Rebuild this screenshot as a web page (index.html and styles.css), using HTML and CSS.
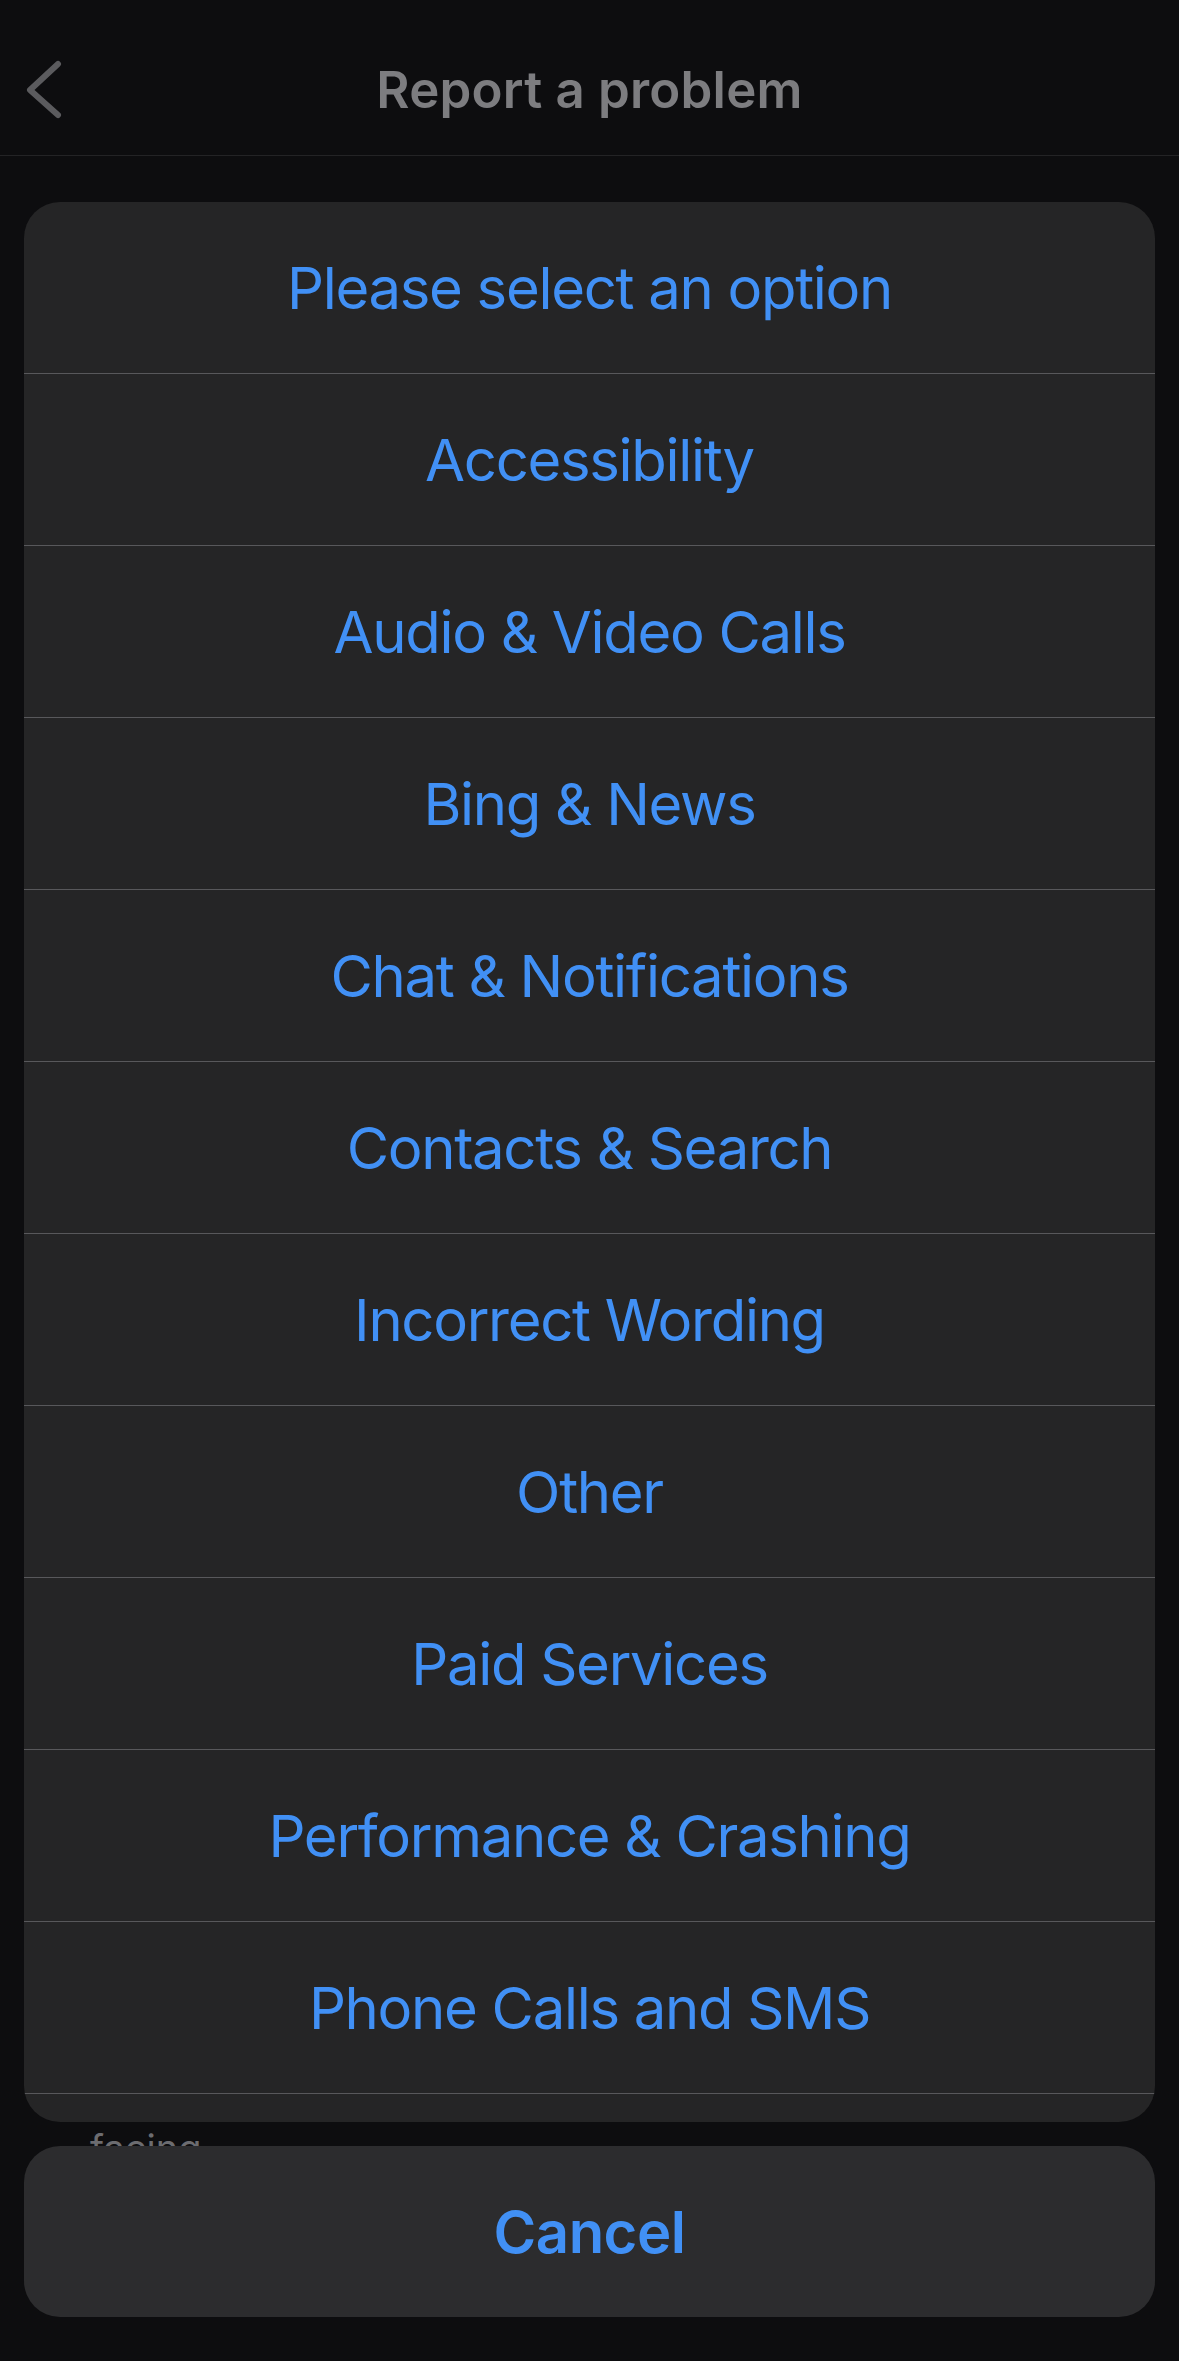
FILE: index.html
```html
<!DOCTYPE html>
<html lang="en">
<head>
<meta charset="utf-8">
<title>Report a problem</title>
<link rel="stylesheet" href="styles.css">
</head>
<body>
<div class="page">
  <header class="navbar">
    <button class="back" aria-label="Back">
      <svg width="40" height="60" viewBox="0 0 40 60"><polyline points="34,4 6,30 34,55" fill="none" stroke="#5b5b5e" stroke-width="6" stroke-linecap="round" stroke-linejoin="round"/></svg>
    </button>
    <h1 class="title">Report a problem</h1>
    <span></span>
  </header>
  <main class="underlay">
    <p class="under-text">facing</p>
  </main>
</div>

<div class="sheet">
  <div class="options">
    <div class="option">Please select an option</div>
    <div class="option">Accessibility</div>
    <div class="option">Audio &amp; Video Calls</div>
    <div class="option">Bing &amp; News</div>
    <div class="option">Chat &amp; Notifications</div>
    <div class="option">Contacts &amp; Search</div>
    <div class="option">Incorrect Wording</div>
    <div class="option">Other</div>
    <div class="option">Paid Services</div>
    <div class="option">Performance &amp; Crashing</div>
    <div class="option">Phone Calls and SMS</div>
    <div class="option"></div>
  </div>
  <div class="cancel">Cancel</div>
</div>
</body>
</html>
```

FILE: styles.css
```css
* { box-sizing: border-box; }

html, body {
  margin: 0;
  padding: 0;
}

body {
  width: 1179px;
  height: 2361px;
  overflow: hidden;
  background: #0d0d0f;
  font-family: Inter, "Noto Sans", "Liberation Sans", sans-serif;
  position: relative;
}

.page {
  display: flex;
  flex-direction: column;
  height: 100%;
}

.navbar {
  margin-top: 24px;
  height: 132px;
  border-bottom: 1px solid #232325;
  display: grid;
  grid-template-columns: 1fr auto 1fr;
  align-items: center;
}

.back {
  justify-self: start;
  margin: 0 0 0 24px;
  padding: 0;
  background: none;
  border: 0;
  display: flex;
}

.title {
  margin: 0;
  font-size: 51px;
  font-weight: 600;
  color: #7d7d80;
  letter-spacing: 0.2px;
}

.underlay {
  flex: 1;
  display: flex;
  flex-direction: column;
  justify-content: flex-end;
  padding: 0 0 190px 90px;
}

.under-text {
  margin: 0;
  font-size: 38px;
  line-height: 46px;
  color: #6c6c70;
}

.sheet {
  position: absolute;
  left: 24px;
  right: 24px;
  bottom: 44px;
  display: flex;
  flex-direction: column;
  gap: 24px;
}

.options {
  height: 1920px;
  overflow: hidden;
  background: #252526;
  border-radius: 36px;
}

.option {
  height: 172px;
  border-bottom: 1px solid #58585b;
  display: flex;
  align-items: center;
  justify-content: center;
  font-size: 58px;
  font-weight: 400;
  color: #4190f5;
  letter-spacing: -1.3px;
}

.cancel {
  height: 171px;
  background: #2c2c2e;
  border-radius: 36px;
  display: flex;
  align-items: center;
  justify-content: center;
  font-size: 58px;
  font-weight: 600;
  color: #4190f5;
  letter-spacing: -0.5px;
}
```
